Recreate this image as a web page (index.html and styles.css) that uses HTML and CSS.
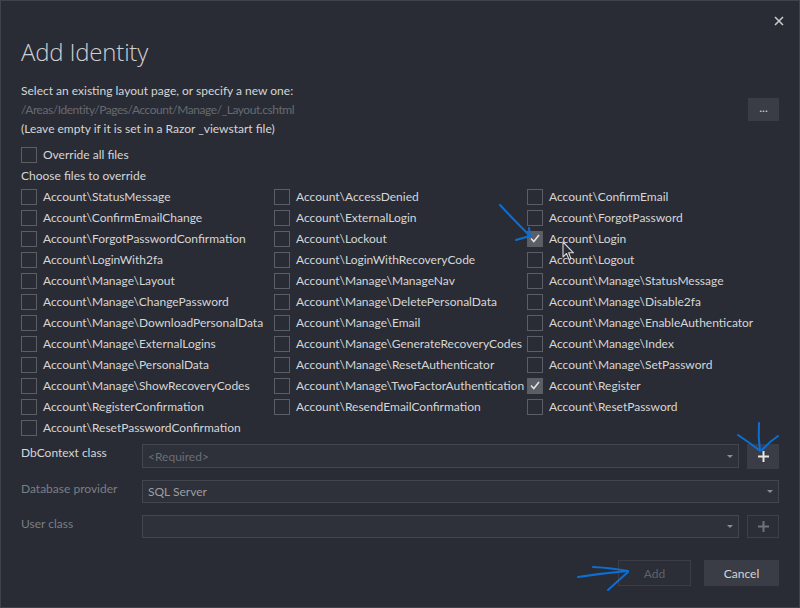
FILE: index.html
```html
<!DOCTYPE html>
<html>
<head>
<meta charset="utf-8">
<link rel="stylesheet" href="styles.css">
</head>
<body>
<div class="dialog">
  <svg class="close" width="10" height="10" viewBox="0 0 10 10"><path d="M1 1L9 9M9 1L1 9" stroke="#c9cacc" stroke-width="1.6"/></svg>
  <h1 class="title">Add Identity</h1>
  <div class="layout-row">
    <div class="layout-text">
      <div class="line">Select an existing layout page, or specify a new one:</div>
      <div class="line path">/Areas/Identity/Pages/Account/Manage/_Layout.cshtml</div>
      <div class="line">(Leave empty if it is set in a Razor _viewstart file)</div>
    </div>
    <div class="btn browse">...</div>
  </div>
  <label class="check override"><span class="box"></span><span>Override all files</span></label>
  <div class="line choose">Choose files to override</div>
  <div class="files">
    <label class="check"><span class="box"></span><span>Account\StatusMessage</span></label>
    <label class="check"><span class="box"></span><span>Account\AccessDenied</span></label>
    <label class="check"><span class="box"></span><span>Account\ConfirmEmail</span></label>
    <label class="check"><span class="box"></span><span>Account\ConfirmEmailChange</span></label>
    <label class="check"><span class="box"></span><span>Account\ExternalLogin</span></label>
    <label class="check"><span class="box"></span><span>Account\ForgotPassword</span></label>
    <label class="check"><span class="box"></span><span>Account\ForgotPasswordConfirmation</span></label>
    <label class="check"><span class="box"></span><span>Account\Lockout</span></label>
    <label class="check checked"><span class="box"><svg width="10" height="9" viewBox="0 0 10 9"><path d="M1 4.5L3.8 7.5L9 1" fill="none" stroke="#e2e2e2" stroke-width="1.6"/></svg></span><span>Account\Login</span></label>
    <label class="check"><span class="box"></span><span>Account\LoginWith2fa</span></label>
    <label class="check"><span class="box"></span><span>Account\LoginWithRecoveryCode</span></label>
    <label class="check"><span class="box"></span><span>Account\Logout</span></label>
    <label class="check"><span class="box"></span><span>Account\Manage\Layout</span></label>
    <label class="check"><span class="box"></span><span>Account\Manage\ManageNav</span></label>
    <label class="check"><span class="box"></span><span>Account\Manage\StatusMessage</span></label>
    <label class="check"><span class="box"></span><span>Account\Manage\ChangePassword</span></label>
    <label class="check"><span class="box"></span><span>Account\Manage\DeletePersonalData</span></label>
    <label class="check"><span class="box"></span><span>Account\Manage\Disable2fa</span></label>
    <label class="check"><span class="box"></span><span>Account\Manage\DownloadPersonalData</span></label>
    <label class="check"><span class="box"></span><span>Account\Manage\Email</span></label>
    <label class="check"><span class="box"></span><span>Account\Manage\EnableAuthenticator</span></label>
    <label class="check"><span class="box"></span><span>Account\Manage\ExternalLogins</span></label>
    <label class="check"><span class="box"></span><span>Account\Manage\GenerateRecoveryCodes</span></label>
    <label class="check"><span class="box"></span><span>Account\Manage\Index</span></label>
    <label class="check"><span class="box"></span><span>Account\Manage\PersonalData</span></label>
    <label class="check"><span class="box"></span><span>Account\Manage\ResetAuthenticator</span></label>
    <label class="check"><span class="box"></span><span>Account\Manage\SetPassword</span></label>
    <label class="check"><span class="box"></span><span>Account\Manage\ShowRecoveryCodes</span></label>
    <label class="check"><span class="box"></span><span>Account\Manage\TwoFactorAuthentication</span></label>
    <label class="check checked"><span class="box"><svg width="10" height="9" viewBox="0 0 10 9"><path d="M1 4.5L3.8 7.5L9 1" fill="none" stroke="#e2e2e2" stroke-width="1.6"/></svg></span><span>Account\Register</span></label>
    <label class="check"><span class="box"></span><span>Account\RegisterConfirmation</span></label>
    <label class="check"><span class="box"></span><span>Account\ResendEmailConfirmation</span></label>
    <label class="check"><span class="box"></span><span>Account\ResetPassword</span></label>
    <label class="check"><span class="box"></span><span>Account\ResetPasswordConfirmation</span></label>
  </div>
  <div class="form">
    <div class="form-row row-db">
      <div class="label">DbContext class</div>
      <div class="combo"><span class="placeholder">&lt;Required&gt;</span><span class="arrow"></span></div>
      <div class="btn plus"><svg width="11" height="11" viewBox="0 0 11 11"><path d="M5.5 0V11M0 5.5H11" stroke="#e6e6e6" stroke-width="2"/></svg></div>
    </div>
    <div class="form-row row-provider">
      <div class="label dim">Database provider</div>
      <div class="combo"><span class="value">SQL Server</span><span class="arrow"></span></div>
    </div>
    <div class="form-row row-user">
      <div class="label dim">User class</div>
      <div class="combo"><span class="value"></span><span class="arrow"></span></div>
      <div class="btn plus disabled"><svg width="11" height="11" viewBox="0 0 11 11"><path d="M5.5 0V11M0 5.5H11" stroke="#6f7278" stroke-width="2"/></svg></div>
    </div>
  </div>
  <div class="actions">
    <div class="btn action disabled">Add</div>
    <div class="btn action">Cancel</div>
  </div>

  <svg class="cursor" width="14" height="20" viewBox="0 0 14 20"><path d="M1 1V16L4.5 12.5L7 18.5L9 17.6L6.6 11.8H11.5Z" fill="#2a2d35" stroke="#d8d8d8" stroke-width="1.1" stroke-linejoin="round"/></svg>
  <svg class="scribble" width="800" height="608" viewBox="0 0 800 608">
    <g fill="none" stroke="#0b6fd6" stroke-width="2" stroke-linecap="round" stroke-linejoin="round">
      <path d="M500 205Q514 220 529 235"/>
      <path d="M516 240L530 236L529 228"/>
      <path d="M759 423Q758 437 760 451"/>
      <path d="M738 435Q750 443 759 450"/>
      <path d="M778 436Q769 442 762 450"/>
      <path d="M578 577Q604 573 628 571"/>
      <path d="M593 567Q612 568 628 571"/>
      <path d="M608 590Q619 580 628 572"/>
    </g>
  </svg>
</div>
</body>
</html>
```
FILE: styles.css
```css
html, body {
  margin: 0;
  padding: 0;
  background: #292c35;
}
.dialog {
  position: relative;
  width: 800px;
  height: 608px;
  box-sizing: border-box;
  border: 1px solid #40434b;
  padding: 0 20px;
  background: #292c35;
  color: #d6d6d6;
  font-family: Lato, "Noto Sans", sans-serif;
  font-size: 12px;
  display: flex;
  flex-direction: column;
  overflow: hidden;
}
.close {
  position: absolute;
  right: 15px;
  top: 15px;
}
.title {
  margin: 36px 0 0 0;
  font-family: "Open Sans", "Noto Sans", sans-serif;
  font-weight: 300;
  font-size: 24px;
  line-height: 30px;
  color: #cfd0d2;
  letter-spacing: -0.2px;
}
.line {
  height: 19px;
  line-height: 19px;
  white-space: nowrap;
}
.path {
  color: #676a71;
  letter-spacing: -0.45px;
}
.layout-row {
  margin-top: 14px;
  display: flex;
  align-items: center;
  justify-content: space-between;
}
.btn {
  box-sizing: border-box;
  display: flex;
  align-items: center;
  justify-content: center;
  background: #3a3d45;
  color: #d6d6d6;
}
.browse {
  width: 31px;
  height: 23px;
  padding-bottom: 4px;
}
.check {
  display: flex;
  align-items: center;
  height: 21px;
  white-space: nowrap;
}
.box {
  box-sizing: border-box;
  width: 16px;
  height: 16px;
  border: 1px solid #5b5e65;
  margin-right: 6px;
  flex: none;
  display: flex;
  align-items: center;
  justify-content: center;
}
.checked .box {
  background: #5b5e65;
}
.override {
  margin-top: 6px;
}
.choose {
  height: 21px;
  line-height: 21px;
}
.files {
  display: grid;
  grid-template-columns: 253px 253px 253px;
  grid-auto-rows: 21px;
}
.form {
  margin-top: 6px;
  display: flex;
  flex-direction: column;
}
.form-row {
  display: flex;
  align-items: flex-start;
  height: 24px;
}
.row-provider { margin-top: 12px; height: 23px; }
.row-user { margin-top: 12px; height: 23px; }
.label {
  width: 121px;
  flex: none;
  line-height: 18px;
}
.label.dim {
  color: #7b7e84;
}
.combo {
  box-sizing: border-box;
  flex: 1;
  height: 100%;
  border: 1px solid #43464e;
  background: #2e3139;
  display: flex;
  align-items: center;
  justify-content: space-between;
  padding: 0 5px 0 5px;
}
.placeholder {
  color: #6a6d74;
}
.value {
  color: #9c9ea3;
}
.arrow {
  width: 0;
  height: 0;
  border-left: 3px solid transparent;
  border-right: 3px solid transparent;
  border-top: 3px solid #8a8d92;
}
.plus {
  width: 32px;
  height: 25px;
  margin-left: 8px;
  flex: none;
}
.plus.disabled {
  height: 23px;
  background: #2b2e37;
  border: 1px solid #3d4048;
}
.actions {
  margin-top: 22px;
  display: flex;
  justify-content: flex-end;
  gap: 13px;
}
.action {
  width: 75px;
  height: 26px;
}
.action.disabled {
  width: 73px;
  background: #2b2e37;
  border: 1px solid #3a3d45;
  color: #5f6269;
}
.cursor {
  position: absolute;
  left: 561px;
  top: 240px;
}
.scribble {
  position: absolute;
  left: -1px;
  top: -1px;
  pointer-events: none;
}
```
